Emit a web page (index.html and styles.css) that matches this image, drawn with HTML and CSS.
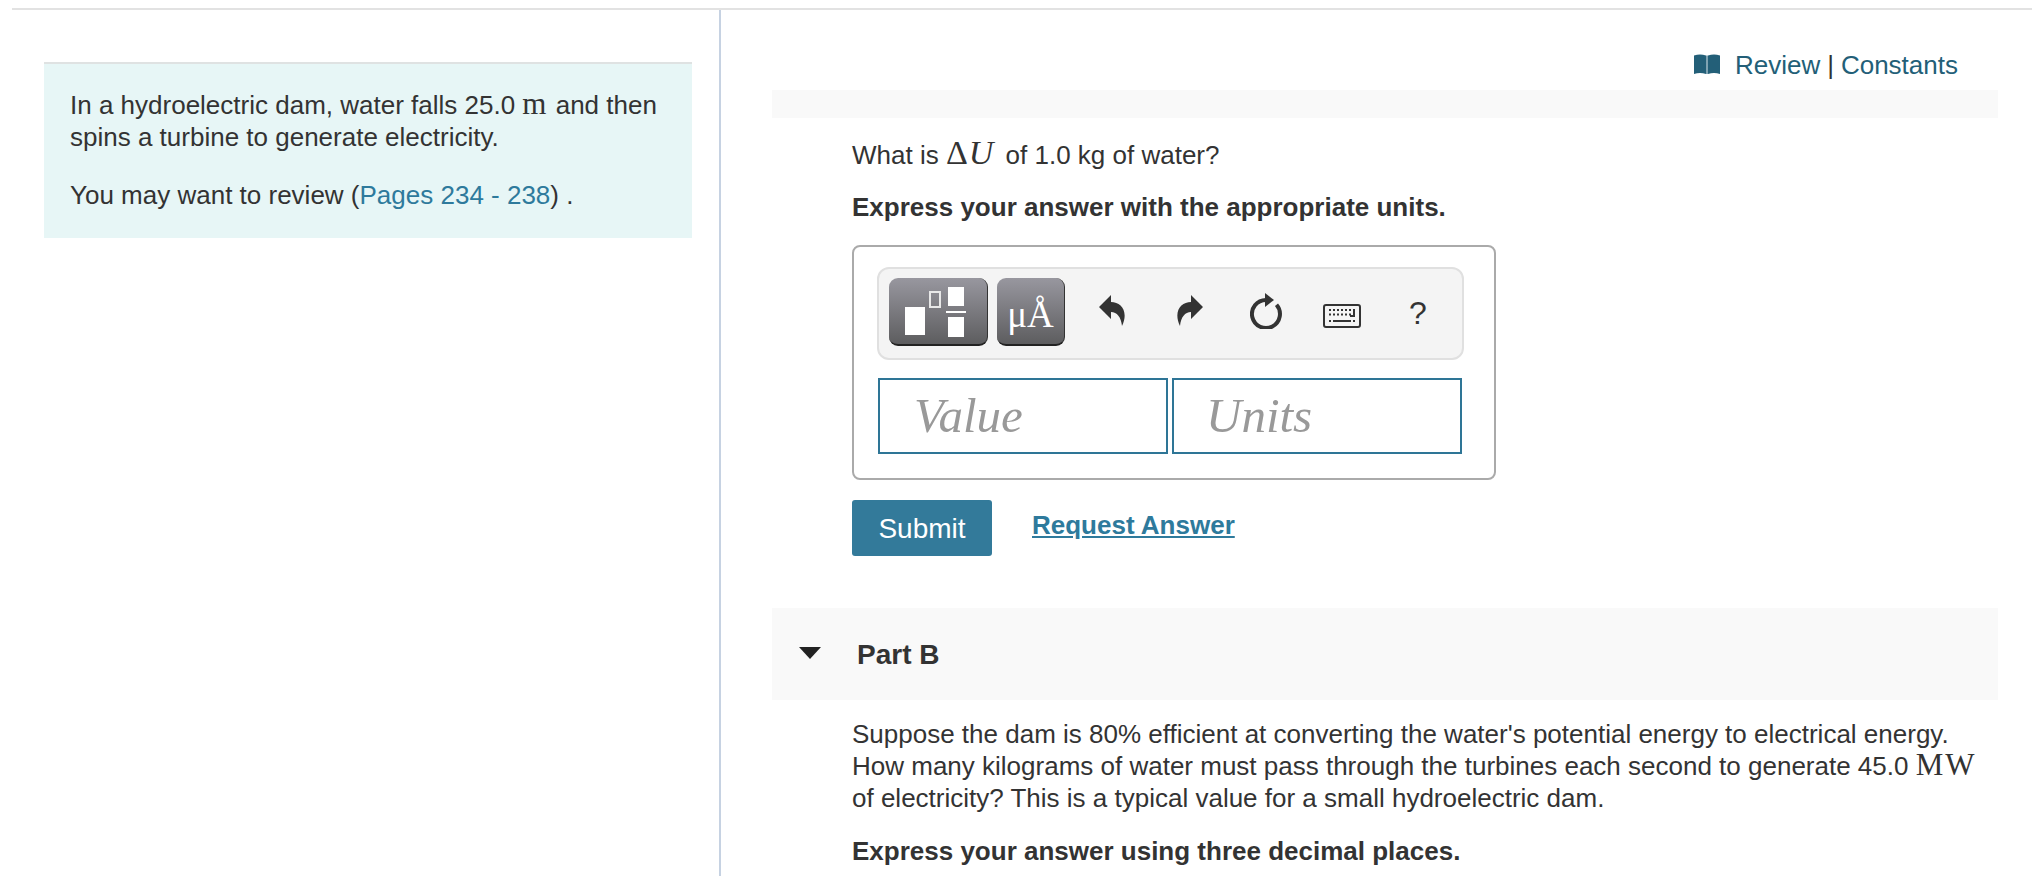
FILE: index.html
```html
<!DOCTYPE html>
<html lang="en">
<head>
<meta charset="utf-8">
<title>Part A</title>
<link rel="stylesheet" href="styles.css">
</head>
<body>
<div class="topline"></div>
<div class="columns">
  <aside class="left">
    <div class="intro">
      <p>In a hydroelectric dam, water falls 25.0 <span class="math">m</span> and then spins a turbine to generate electricity.</p>
      <p class="gap">You may want to review (<a class="link" href="#">Pages 234 - 238</a>) .</p>
    </div>
  </aside>
  <main class="right">
    <div class="review">
      <svg class="book" width="26" height="20" viewBox="0 0 26 20"><path d="M0 1.500 C4 0 8 0 12 1.500 V20 C8 18.500 4 18.500 0 20 Z M14 1.500 C18 0 22 0 26 1.500 V20 C22 18.500 18 18.500 14 20 Z" fill="#235f78"/><rect x="12" y="1.500" width="2" height="18.500" fill="#7fa3b2"/></svg>
      <a class="revlink" href="#">Review</a><span class="sep">|</span><a class="revlink" href="#">Constants</a>
    </div>
    <div class="band-thin"></div>
    <section class="part">
      <p class="q">What is <span class="math math-q">Δ<i>U</i></span> of 1.0 kg of water?</p>
      <p class="strong instr">Express your answer with the appropriate units.</p>
      <div class="answer">
        <div class="toolbar">
          <button class="tbtn tbtn-a" type="button" aria-label="templates">
            <svg width="62" height="52" viewBox="0 0 62 52"><rect x="0" y="20" width="20" height="28" fill="#fff"/><rect x="25" y="5" width="10" height="15" fill="none" stroke="#e8e8e8" stroke-width="2"/><rect x="43" y="0" width="16" height="19" fill="#fff"/><rect x="41" y="24" width="20" height="2" fill="#fff"/><rect x="43" y="30" width="16" height="20" fill="#fff"/></svg>
          </button>
          <button class="tbtn tbtn-b" type="button">μÅ</button>
          <svg class="ic ic-undo" width="27" height="31" viewBox="0 0 27 31"><path d="M0 12 L12 0 V7 C22 7 30 16 23 31 C22 22 18 17 12 17 V24 Z" fill="#333"/></svg>
          <svg class="ic ic-redo" width="27" height="31" viewBox="0 0 27 31"><path d="M27 12 L15 0 V7 C5 7 -3 16 4 31 C5 22 9 17 15 17 V24 Z" fill="#333"/></svg>
          <svg class="ic ic-reload" width="32" height="36" viewBox="0 0 32 36"><path d="M16 7 A14 14 0 1 0 26.500 11.800" fill="none" stroke="#333" stroke-width="4"/><path d="M15 0 L24 7 L15 14 Z" fill="#333"/></svg>
          <svg class="ic ic-kbd" width="38" height="24" viewBox="0 0 38 24"><rect x="1" y="1" width="36" height="22" rx="2" fill="#f4f4f4" stroke="#333" stroke-width="2"/><path d="M6 6h2M10 6h2M14 6h2M18 6h2M22 6h2M26 6h2M30 6h2M6 10.500h2M10 10.500h2M14 10.500h2M18 10.500h2M22 10.500h2M26 10.500h2M31 5v7M27 12h5M6 17h2M10 17h18M30 17h2" stroke="#333" stroke-width="2" fill="none"/></svg>
          <span class="help">?</span>
        </div>
        <div class="inputs">
          <div class="field">Value</div>
          <div class="field field-units">Units</div>
        </div>
      </div>
      <div class="actions">
        <button class="submit" type="button">Submit</button>
        <a class="request" href="#">Request Answer</a>
      </div>
    </section>
    <div class="part-head">
      <span class="tri"></span>
      <h2>Part B</h2>
    </div>
    <section class="part part-b">
      <p>Suppose the dam is 80% efficient at converting the water's potential energy to electrical energy. How many kilograms of water must pass through the turbines each second to generate 45.0 <span class="math">MW</span> of electricity? This is a typical value for a small hydroelectric dam.</p>
      <p class="strong instr2">Express your answer using three decimal places.</p>
    </section>
  </main>
</div>
</body>
</html>
```
FILE: styles.css
```css
* { box-sizing: border-box; }
html, body { margin: 0; padding: 0; height: 876px; overflow: hidden; background: #fff; }
body { font-family: "Liberation Sans", Arial, sans-serif; font-size: 26px; line-height: 32px; color: #333; }
p { margin: 0; }
.topline { margin: 8px 0 0 12px; height: 2px; background: #e2e2e2; }
.columns { display: flex; height: 866px; }
.left { width: 719px; padding: 52px 27px 0 44px; flex: none; }
.intro { background: #e7f6f6; border-top: 2px solid #dfe2e2; padding: 25px 24px 26px 26px; height: 176px; }
.gap { margin-top: 26px; }
.link { color: #2e7a9c; text-decoration: none; }
.math { font-family: "Liberation Serif", serif; font-size: 31px; line-height: 0; letter-spacing: 2px; }
.math-q { font-size: 34px; letter-spacing: 1px; margin-right: 4px; }
.right { flex: 1; border-left: 2px solid #c6d2e2; padding: 0 34px 0 51px; }
.review { height: 80px; padding: 39px 40px 0 0; display: flex; justify-content: flex-end; align-items: flex-start; color: #333; }
.book { margin: 5px 15px 0 0; }
.revlink { color: #235f78; text-decoration: none; line-height: 32px; }
.sep { margin: 0 7px; line-height: 32px; }
.band-thin { height: 28px; background: #f9f9f9; }
.part { padding-left: 80px; }
.q { padding-top: 21px; }
.strong { font-weight: 700; }
.instr { margin-top: 20px; }
.answer { width: 644px; height: 235px; margin-top: 22px; border: 2px solid #aaa; border-radius: 8px; padding: 20px 30px 0 23px; }
.toolbar { height: 93px; width: 587px; background: #f4f4f4; border: 2px solid #e0e0e0; border-radius: 12px; display: flex; align-items: flex-start; padding: 9px 0 0 10px; position: relative; }
.tbtn { height: 68px; border: 0; border-bottom: 2px solid #222; border-right: 1px solid #333; border-radius: 9px; background: linear-gradient(#98979f, #5d5d5f); color: #fff; padding: 0; flex: none; }
.tbtn-a { width: 99px; padding: 4px 0 0 16px; text-align: left; }
.tbtn-a svg { display: block; }
.tbtn-b { width: 68px; margin-left: 9px; padding-top: 8px; font-family: "Liberation Serif", serif; font-size: 37px; line-height: 58px; }
.ic { flex: none; display: block; }
.ic-undo { margin: 17px 0 0 34px; }
.ic-redo { margin: 17px 0 0 50px; }
.ic-reload { margin: 15px 0 0 47px; }
.ic-kbd { margin: 26px 0 0 41px; }
.help { margin: 15px 0 0 48px; font-size: 32px; line-height: 40px; }
.inputs { display: flex; gap: 4px; margin: 18px 0 0 1px; }
.field { width: 290px; height: 76px; border: 2px solid #2e7596; padding: 0 0 0 34px; font-family: "Liberation Serif", serif; font-style: italic; font-size: 49px; line-height: 72px; color: #999; }
.field-units { padding-left: 32px; }
.actions { display: flex; align-items: flex-start; margin-top: 20px; height: 108px; }
.submit { width: 140px; height: 56px; background: #337a9a; color: #fff; border: 0; border-radius: 3px; font-family: inherit; font-size: 28px; padding: 2px 0 0; }
.request { margin: 9px 0 0 40px; color: #2e7a9c; font-weight: 700; font-size: 26px; line-height: 32px; text-decoration: underline; }
.part-head { height: 92px; background: #f9f9f9; display: flex; align-items: center; padding-left: 27px; }
.tri { width: 0; height: 0; border-left: 11px solid transparent; border-right: 11px solid transparent; border-top: 12px solid #222; margin-top: -2px; }
.part-head h2 { margin: 2px 0 0 36px; font-size: 28px; font-weight: 700; line-height: 32px; }
.part-b { padding-top: 18px; }
.instr2 { margin-top: 21px; }
```
